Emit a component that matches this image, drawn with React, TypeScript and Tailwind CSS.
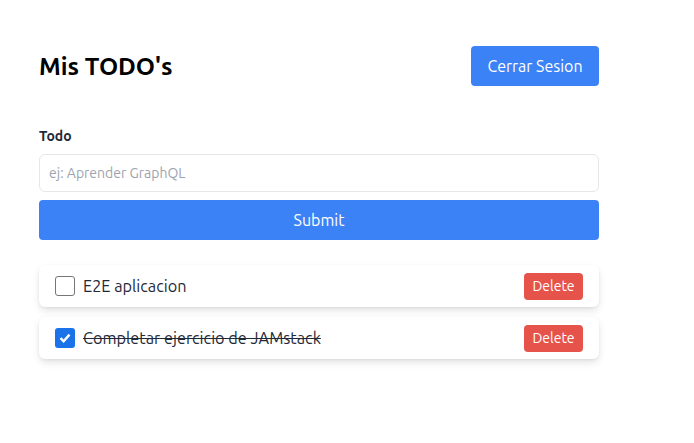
import React from "react";

export default function App() {
  return (
    <div className="w-[694px] h-[443px] bg-white" style={{ fontFamily: "Ubuntu, 'Noto Sans', sans-serif" }}>
      <div className="w-[560px] ml-[39px] pt-[46px]">
        <div className="flex items-center justify-between">
          <h1 className="text-[24.4px] font-bold text-black">Mis TODO's</h1>
          <button className="h-[40px] w-[128px] rounded bg-[#3b82f6] text-white text-[16px]">Cerrar Sesion</button>
        </div>
        <div className="mt-[40px]">
          <label className="block text-[14px] font-bold text-[#1f2937] leading-[20px]">Todo</label>
          <input
            className="mt-[8px] w-full h-[38px] rounded-md border border-[#e5e7eb] px-[9px] text-[14px] placeholder:text-[#9ca3af] outline-none"
            placeholder="ej: Aprender GraphQL"
          />
          <button className="mt-[8px] w-full h-[40px] rounded bg-[#3b82f6] text-white text-[16px]">Submit</button>
        </div>
        <div className="mt-[25px] flex flex-col gap-[10px]">
          {[
            { t: "E2E aplicacion", done: false },
            { t: "Completar ejercicio de JAMstack", done: true },
          ].map((it) => (
            <div key={it.t} className="h-[42px] rounded-md bg-white shadow-[0_4px_8px_-1px_rgba(0,0,0,0.12),0_1px_3px_rgba(0,0,0,0.06)] flex items-center justify-between pl-[16px] pr-[16px]">
              <div className="flex items-center gap-[8px]">
                {it.done ? (
                  <div className="w-[20px] h-[20px] rounded-[3px] bg-[#1a73e8] flex items-center justify-center">
                    <svg width="14" height="14" viewBox="0 0 14 14"><path d="M2.5 7.2 L5.6 10.2 L11.5 3.6" stroke="white" strokeWidth="2.4" fill="none" /></svg>
                  </div>
                ) : (
                  <div className="w-[20px] h-[20px] rounded-[3px] border-[1.5px] border-[#767676] bg-white" />
                )}
                <span className={"text-[16.3px] text-[#1f2937] " + (it.done ? "line-through" : "")}>{it.t}</span>
              </div>
              <button className="h-[27px] w-[59px] rounded bg-[#e5534b] text-white text-[14px]">Delete</button>
            </div>
          ))}
        </div>
      </div>
    </div>
  );
}
